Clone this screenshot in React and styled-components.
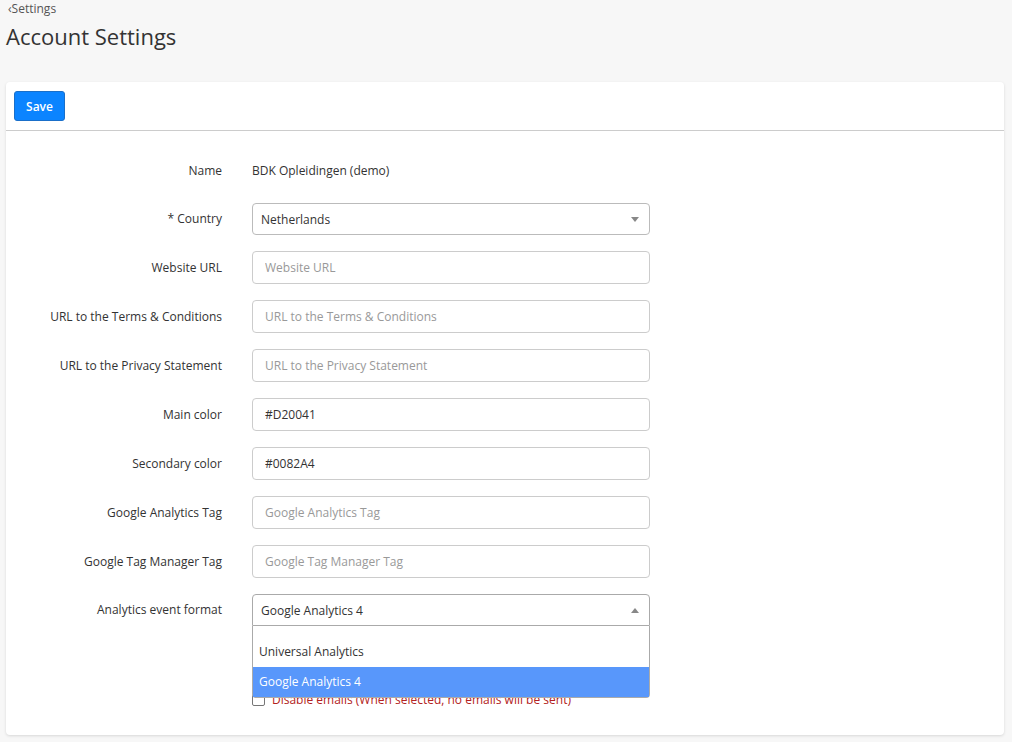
import React, { useState } from "react";
import styled, { createGlobalStyle } from "styled-components";

const GlobalStyle = createGlobalStyle`
  html, body {
    margin: 0;
    padding: 0;
    background: #f7f7f7;
    font-family: "Open Sans", "Noto Sans", sans-serif;
    color: #333;
  }
  * { box-sizing: border-box; }
`;

const Page = styled.div`
  padding: 0 8px 8px 6px;
  min-height: 742px;
`;

const Breadcrumb = styled.a`
  display: block;
  padding-top: 1px;
  font-size: 12px;
  line-height: 16px;
  color: #555;
  text-decoration: none;
  padding-left: 2px;
`;

const Title = styled.h1`
  margin: 4px 0 0;
  font-size: 22px;
  font-weight: 400;
  line-height: 30px;
  color: #333;
`;

const Card = styled.div`
  margin-top: 31px;
  background: #fff;
  border-radius: 4px;
  box-shadow: 0 1px 3px rgba(0, 0, 0, 0.13);
`;

const Toolbar = styled.div`
  padding: 9px 8px 9px;
  border-bottom: 1px solid #ccc;
`;

const SaveButton = styled.button`
  height: 30px;
  width: 51px;
  background: #0b84ff;
  border: 1px solid #1a6fc9;
  border-radius: 3px;
  color: #fff;
  font-family: inherit;
  font-size: 12px;
  font-weight: 600;
  cursor: pointer;
`;

const Form = styled.div`
  padding: 23px 0 27px;
  display: flex;
  flex-direction: column;
  gap: 16px;
`;

const Row = styled.div`
  display: grid;
  grid-template-columns: 216px 398px;
  column-gap: 30px;
  align-items: center;
  min-height: ${(p) => p.$height || 33}px;
  margin-top: ${(p) => p.$offset || 0}px;
`;

const Label = styled.label`
  text-align: right;
  font-size: 12px;
  line-height: 16px;
  color: #333;
`;

const Value = styled.div`
  font-size: 12px;
  color: #333;
`;

const Input = styled.input`
  height: 33px;
  width: 100%;
  border: 1px solid #ccc;
  border-radius: 4px;
  padding: 0 12px;
  font-family: inherit;
  font-size: 12px;
  color: #333;
  background: #fff;
  outline: none;
  &::placeholder { color: #999; }
`;

const SelectWrap = styled.div`
  position: relative;
`;

const SelectBox = styled.div`
  height: 32px;
  border: 1px solid ${(p) => (p.$open ? "#aaa" : "#bbb")};
  border-radius: ${(p) => (p.$open ? "4px 4px 0 0" : "4px")};
  padding: 0 8px;
  display: flex;
  align-items: center;
  justify-content: space-between;
  font-size: 12px;
  color: #333;
  background: #fff;
  cursor: pointer;
`;

const Arrow = styled.span`
  width: 0;
  height: 0;
  border-left: 4px solid transparent;
  border-right: 4px solid transparent;
  ${(p) =>
    p.$up
      ? "border-bottom: 5px solid #888;"
      : "border-top: 5px solid #888;"}
  margin-right: 2px;
`;

const Menu = styled.ul`
  position: absolute;
  top: 100%;
  left: 0;
  right: 0;
  margin: 0;
  padding: 0;
  list-style: none;
  background: #fff;
  border: 1px solid #aaa;
  border-top: none;
  border-radius: 0 0 4px 4px;
  z-index: 10;
`;

const Option = styled.li`
  height: ${(p) => (p.$blank ? 11 : 30)}px;
  line-height: 30px;
  padding: 0 6px;
  font-size: 12px;
  color: ${(p) => (p.$active ? "#fff" : "#333")};
  background: ${(p) => (p.$active ? "#5897fb" : "#fff")};
`;

const CheckRow = styled.label`
  display: flex;
  align-items: center;
  gap: 7px;
  font-size: 12px;
  color: #b22222;
`;

const Box = styled.span`
  width: 13px;
  height: 13px;
  border: 1px solid #767676;
  border-radius: 2px;
  background: #fff;
`;

const fields = [
  { label: "Website URL", placeholder: "Website URL" },
  { label: "URL to the Terms & Conditions", placeholder: "URL to the Terms & Conditions" },
  { label: "URL to the Privacy Statement", placeholder: "URL to the Privacy Statement" },
  { label: "Main color", value: "#D20041" },
  { label: "Secondary color", value: "#0082A4" },
  { label: "Google Analytics Tag", placeholder: "Google Analytics Tag" },
  { label: "Google Tag Manager Tag", placeholder: "Google Tag Manager Tag" },
];

const App = () => {
  const [open, setOpen] = useState(true);
  const [format, setFormat] = useState("Google Analytics 4");

  return (
    <Page>
      <GlobalStyle />
      <Breadcrumb href="#">‹Settings</Breadcrumb>
      <Title>Account Settings</Title>
      <Card>
        <Toolbar>
          <SaveButton>Save</SaveButton>
        </Toolbar>
        <Form>
          <Row>
            <Label>Name</Label>
            <Value>BDK Opleidingen (demo)</Value>
          </Row>
          <Row $height={32}>
            <Label>* Country</Label>
            <SelectBox>
              <span>Netherlands</span>
              <Arrow />
            </SelectBox>
          </Row>
          {fields.map((f) => (
            <Row key={f.label}>
              <Label>{f.label}</Label>
              <Input placeholder={f.placeholder} defaultValue={f.value} />
            </Row>
          ))}
          <Row $height={32}>
            <Label>Analytics event format</Label>
            <SelectWrap>
              <SelectBox $open={open} onClick={() => setOpen(!open)}>
                <span>{format}</span>
                <Arrow $up={open} />
              </SelectBox>
              {open && (
                <Menu>
                  <Option $blank />
                  {["Universal Analytics", "Google Analytics 4"].map((o) => (
                    <Option
                      key={o}
                      $active={o === format}
                      onClick={() => {
                        setFormat(o);
                        setOpen(false);
                      }}
                    >
                      {o}
                    </Option>
                  ))}
                </Menu>
              )}
            </SelectWrap>
          </Row>
          <Row $height={14} $offset={49}>
            <span />
            <CheckRow>
              <Box />
              Disable emails (When selected, no emails will be sent)
            </CheckRow>
          </Row>
        </Form>
      </Card>
    </Page>
  );
};

export default App;
